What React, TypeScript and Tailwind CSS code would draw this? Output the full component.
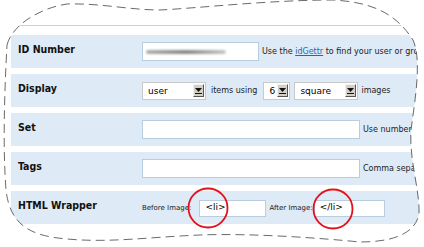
import React from "react";

const font = { fontFamily: '"DejaVu Sans", Verdana, sans-serif' };
const labelFont = { fontFamily: '"DejaVu Sans Condensed", "DejaVu Sans", sans-serif' };

function Row({ label, children }: { label: string; children: React.ReactNode }) {
  return (
    <div className="flex h-[33px] bg-[#deeaf6]">
      <div className="w-[131px] shrink-0 pl-[7px] pt-[8px] text-[10.5px] font-bold leading-[12px] text-[#111]" style={labelFont}>
        {label}
      </div>
      <div className="flex items-center whitespace-nowrap">{children}</div>
    </div>
  );
}

function Select({ value, width }: { value: string; width: string }) {
  return (
    <div className={`flex h-[18px] items-center justify-between border border-[#c9c9c9] bg-white pl-[5px] pr-[1px] ${width}`}>
      <span className="pt-[2px] text-[9px] leading-none text-black">{value}</span>
      {/* old-style dropdown button */}
      <span className="flex h-[13px] w-[11px] flex-col items-center justify-center border border-t-[#f2f2f2] border-l-[#f2f2f2] border-r-[#555] border-b-[#555] bg-[#d4d0c8]">
        <svg width="7" height="6" viewBox="0 0 7 6">
          <path d="M0 0H7L3.5 4Z" fill="#111" />
          <rect x="0" y="5" width="7" height="1" fill="#111" />
        </svg>
      </span>
    </div>
  );
}

function TextBox({ width, height = "h-[19px]", children }: { width: string; height?: string; children?: React.ReactNode }) {
  return (
    <div className={`flex items-center border border-[#b9cde1] bg-white pl-[5px] text-[9px] text-black ${width} ${height}`}>{children}</div>
  );
}

const blob =
  "M7 45 C12 25 40 8 67 4 C100 3 130 10 160 10 C200 8 270 0 333 0 C370 2 395 12 413 40 C422 60 415 100 411 130 C409 160 420 190 419 214 C415 235 390 242 360 242 C320 238 250 233 200 235 C150 237 110 243 67 239 C30 236 10 225 6 190 C3 150 4 100 7 45 Z";

export default function App() {
  return (
    <div className="relative h-[247px] w-[424px] overflow-hidden bg-white" style={font}>
      <div className="pt-[25px]">
        <div className="h-px bg-[#d0d0d0]" />
        <div className="mt-[9px] flex flex-col gap-[6px] pl-[11px]">
          <Row label="ID Number">
            <TextBox width="w-[117px]">
              <div className="ml-[-2px] h-[4px] w-[80px] rounded-full bg-gradient-to-r from-[#b0b0b0] via-[#888] to-[#c8c8c8] blur-[1px]" />
            </TextBox>
            <span className="ml-[3px] text-[8px] text-[#222]">
              Use the <span className="text-[#1b6cb3] underline">idGettr</span> to find your user or group ID
            </span>
          </Row>
          <Row label="Display">
            <Select value="user" width="w-[64px]" />
            <span className="ml-[5px] text-[8px] text-[#222]">items using</span>
            <div className="ml-[6px]">
              <Select value="6" width="w-[27px]" />
            </div>
            <div className="ml-[4px]">
              <Select value="square" width="w-[64px]" />
            </div>
            <span className="ml-[3px] text-[8px] text-[#222]">images</span>
          </Row>
          <Row label="Set">
            <TextBox width="w-[218px]" />
            <span className="ml-[3px] text-[8px] text-[#222]">Use number from set URL</span>
          </Row>
          <Row label="Tags">
            <TextBox width="w-[218px]" />
            <span className="ml-[3px] text-[8px] text-[#222]">Comma separated</span>
          </Row>
          <Row label="HTML Wrapper">
            <span className="pt-[2px] text-[7px] text-[#222]">Before Image:</span>
            <div className="ml-[8px] pt-[1px]">
              <TextBox width="w-[67px]" height="h-[17px]">&lt;li&gt;</TextBox>
            </div>
            <span className="ml-[3px] pt-[2px] text-[7px] text-[#222]">After Image:</span>
            <div className="ml-[1px] pt-[1px]">
              <TextBox width="w-[71px]" height="h-[17px]">&lt;/li&gt;</TextBox>
            </div>
          </Row>
        </div>
      </div>

      {/* torn-out cut shape and annotation circles on top */}
      <svg className="absolute inset-0" width="424" height="247" viewBox="0 0 424 247">
        <path d={"M0 0H424V247H0Z " + blob} fill="#fff" fillRule="evenodd" />
        <path d={blob} fill="none" stroke="#444" strokeWidth="0.8" strokeDasharray="9 5" />
        <circle cx="208" cy="208" r="19.5" fill="none" stroke="#e3121a" strokeWidth="1.8" />
        <circle cx="333" cy="209" r="19.5" fill="none" stroke="#e3121a" strokeWidth="1.8" />
      </svg>
    </div>
  );
}
